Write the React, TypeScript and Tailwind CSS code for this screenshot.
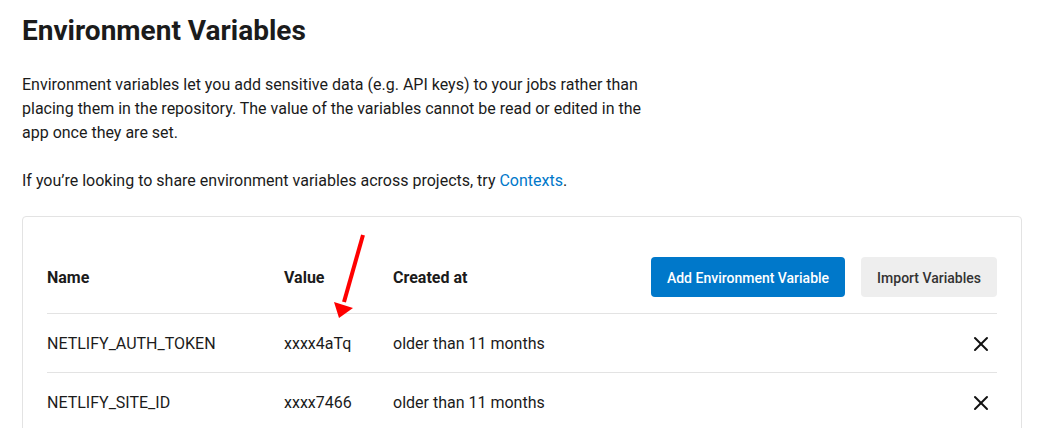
import { X } from 'lucide-react';

const rows = [
  { name: 'NETLIFY_AUTH_TOKEN', value: 'xxxx4aTq', created: 'older than 11 months' },
  { name: 'NETLIFY_SITE_ID', value: 'xxxx7466', created: 'older than 11 months' },
];

export default function App() {
  return (
    <div
      className="relative min-h-[428px] bg-white pl-[22px] pt-[13px] text-[#1b1b1b]"
      style={{ fontFamily: 'Roboto, "Liberation Sans", sans-serif' }}
    >
      {/* Header */}
      <h1 className="text-[28px] leading-[36px] font-bold mb-6">Environment Variables</h1>
      <p className="w-[632px] text-base leading-6 mb-6">
        Environment variables let you add sensitive data (e.g. API keys) to your jobs rather than
        placing them in the repository. The value of the variables cannot be read or edited in the
        app once they are set.
      </p>
      <p className="text-base leading-6 mb-[23px]">
        If you’re looking to share environment variables across projects, try{' '}
        <a className="text-[#0078ca]">Contexts</a>.
      </p>

      {/* Variables table */}
      <div className="w-[1000px] rounded border border-[#e3e3e3] px-6 pt-6">
        <div className="flex items-center py-4 border-b border-[#e3e3e3] font-bold text-base">
          <div className="w-[237px] pt-0.5">Name</div>
          <div className="w-[109px] pt-0.5">Value</div>
          <div className="flex-1 pt-0.5">Created at</div>
          <div className="flex gap-4 text-sm font-medium">
            <button className="h-10 px-4 pt-0.5 rounded bg-[#0078ca] text-white">Add Environment Variable</button>
            <button className="h-10 px-4 pt-0.5 rounded bg-[#eeeeee] text-[#333333]">Import Variables</button>
          </div>
        </div>
        {rows.map((row) => (
          <div key={row.name} className="flex items-center h-[59px] border-b border-[#e3e3e3] text-base">
            <div className="w-[237px] pt-0.5">{row.name}</div>
            <div className="w-[109px] pt-0.5">{row.value}</div>
            <div className="flex-1 pt-0.5">{row.created}</div>
            <button className="mr-1 pt-0.5 text-[#111111]">
              <X size={24} strokeWidth={2} />
            </button>
          </div>
        ))}
      </div>

      {/* Annotation arrow */}
      <svg className="absolute left-0 top-0 pointer-events-none" width="1042" height="428">
        <line x1="363" y1="235" x2="344" y2="302" stroke="#ff0000" strokeWidth="4" />
        <polygon points="339,318 334,302 353,308" fill="#ff0000" />
      </svg>
    </div>
  );
}
